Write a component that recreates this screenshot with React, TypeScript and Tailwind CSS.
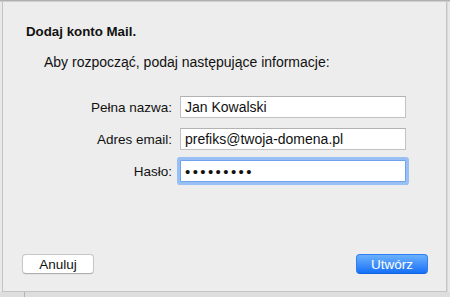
import React from "react";

export default function App() {
  const font = { fontFamily: '"Liberation Sans", Arial, sans-serif' };
  return (
    <div
      className="w-[450px] h-[297px] bg-[#e4e4e4] flex flex-col overflow-hidden text-[13.5px] text-[#111]"
      style={font}
    >
      <div className="h-[2px] w-full bg-[#b0b0b0] border-b border-[#cfcfcf] shrink-0" />
      <div className="flex h-[290px] shrink-0">
        <div className="w-[2px] bg-[#e9e9e9]" />
        <div className="w-[445px] h-full bg-[#ededed] border-l border-r border-b border-[#c4c4c4] flex flex-col">
          <div className="pl-[23px] pt-[22px] font-bold leading-[15px] text-[13.3px]">Dodaj konto Mail.</div>
          <div className="pl-[41px] mt-[15px] leading-[16px] text-[14px]">
            Aby rozpocząć, podaj następujące informacje:
          </div>
          <div className="mt-[26px] flex flex-col gap-[10px]">
            <div className="flex items-center h-[22px]">
              <div className="w-[169px] text-right leading-[15px]">Pełna nazwa:</div>
              <div className="ml-[8px] w-[226px] h-[22px] bg-white border border-[#c2c2c2] border-t-[#b2b2b2] pl-[4px] flex items-center leading-[16px] text-[14px]">
                Jan Kowalski
              </div>
            </div>
            <div className="flex items-center h-[22px]">
              <div className="w-[169px] text-right leading-[15px]">Adres email:</div>
              <div className="ml-[8px] w-[226px] h-[22px] bg-white border border-[#c2c2c2] border-t-[#b2b2b2] pl-[4px] flex items-center leading-[16px] text-[14px]">
                prefiks@twoja-domena.pl
              </div>
            </div>
            <div className="flex items-center h-[22px]">
              <div className="w-[169px] text-right leading-[15px]">Hasło:</div>
              <div className="ml-[8px] w-[226px] h-[22px] bg-white border border-[#6fa2ec] rounded-[1px] shadow-[0_0_0_3px_#98c0f4] pl-[4px] flex items-center">
                <span className="text-[15px] tracking-[2.4px] leading-[15px] text-[#111]">•••••••••</span>
              </div>
            </div>
          </div>
          <div className="mt-auto mb-[17px] flex justify-between pl-[19px] pr-[18px]">
            <button className="w-[72px] h-[20px] bg-white border border-[#c6c6c6] border-b-[#b0b0b0] rounded-[4px] leading-[15px] text-[13.5px] text-[#111] shadow-[0_0.5px_0.5px_rgba(0,0,0,0.08)]">
              Anuluj
            </button>
            <button className="w-[72px] h-[20px] bg-gradient-to-b from-[#6ab0fc] to-[#1270f6] border border-[#2e7ff0] border-b-[#1565e0] rounded-[4px] leading-[15px] text-[13.5px] text-white">
              Utwórz
            </button>
          </div>
        </div>
        <div className="flex-1 bg-[#e8e8e8] border-l border-[#dadada]" />
      </div>
      <div className="flex-1 bg-[#dedede] flex">
        <div className="w-[24px]" />
        <div className="w-px bg-[#b3b3b3]" />
      </div>
    </div>
  );
}
